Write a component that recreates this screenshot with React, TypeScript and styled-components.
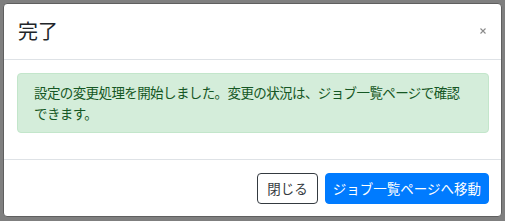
import React from "react";
import styled, { createGlobalStyle } from "styled-components";

const Global = createGlobalStyle`
  html, body {
    margin: 0;
    padding: 0;
    background: #7f7f7f;
  }
  body {
    font-family: "Noto Sans CJK JP", "Noto Sans", sans-serif;
    color: #212529;
  }
`;

const Backdrop = styled.div`
  width: 505px;
  height: 221px;
  box-sizing: border-box;
  padding: 3px;
  background: #7f7f7f;
`;

const Modal = styled.div`
  width: 499px;
  box-sizing: border-box;
  background: #fff;
  border: 1px solid #5f5f5f;
  border-radius: 4px;
  display: flex;
  flex-direction: column;
  overflow: hidden;
`;

const Header = styled.div`
  display: flex;
  align-items: center;
  justify-content: space-between;
  padding: 12px 14px 13px 14px;
  border-bottom: 1px solid #dee2e6;
`;

const Title = styled.h5`
  margin: 0;
  font-size: 20px;
  line-height: 30px;
  font-weight: 400;
  color: #212529;
`;

const CloseX = styled.button`
  border: none;
  background: transparent;
  padding: 0;
  margin-right: 1px;
  width: 7px;
  height: 7px;
  display: flex;
  align-items: center;
  justify-content: center;
  cursor: pointer;
`;

const Body = styled.div`
  padding: 13px 12px 13px 13px;
`;

const Alert = styled.div`
  background: #d4edda;
  border: 1px solid #c3e6cb;
  border-radius: 4px;
  color: #155724;
  font-size: 13.5px;
  letter-spacing: -0.6px;
  line-height: 21px;
  padding: 8px 19px 8px 16px;
  margin-bottom: 13px;
`;

const Footer = styled.div`
  display: flex;
  justify-content: flex-end;
  align-items: center;
  gap: 7px;
  padding: 13px 12px 12px 12px;
  border-top: 1px solid #dee2e6;
`;

const Button = styled.button<{ $primary?: boolean }>`
  height: 31px;
  box-sizing: border-box;
  font-family: "Noto Sans CJK JP", "Noto Sans", sans-serif;
  font-size: 13.5px;
  line-height: 1;
  border-radius: 4px;
  padding: ${(p) => (p.$primary ? "0 7px" : "0 9px")};
  border: 1px solid ${(p) => (p.$primary ? "#007bff" : "#343a40")};
  background: ${(p) => (p.$primary ? "#007bff" : "#fff")};
  color: ${(p) => (p.$primary ? "#fff" : "#343a40")};
  cursor: pointer;
`;

export default function App() {
  return (
    <>
      <Global />
      <Backdrop>
        <Modal>
          <Header>
            <Title>完了</Title>
            <CloseX aria-label="Close">
              <svg width="6" height="6" viewBox="0 0 6 6">
                <path d="M0.5 0.5 L5.5 5.5 M5.5 0.5 L0.5 5.5" stroke="#8a8a8a" strokeWidth="1.1" />
              </svg>
            </CloseX>
          </Header>
          <Body>
            <Alert>
              設定の変更処理を開始しました。変更の状況は、ジョブ一覧ページで確認できます。
            </Alert>
          </Body>
          <Footer>
            <Button>閉じる</Button>
            <Button $primary>ジョブ一覧ページへ移動</Button>
          </Footer>
        </Modal>
      </Backdrop>
    </>
  );
}
